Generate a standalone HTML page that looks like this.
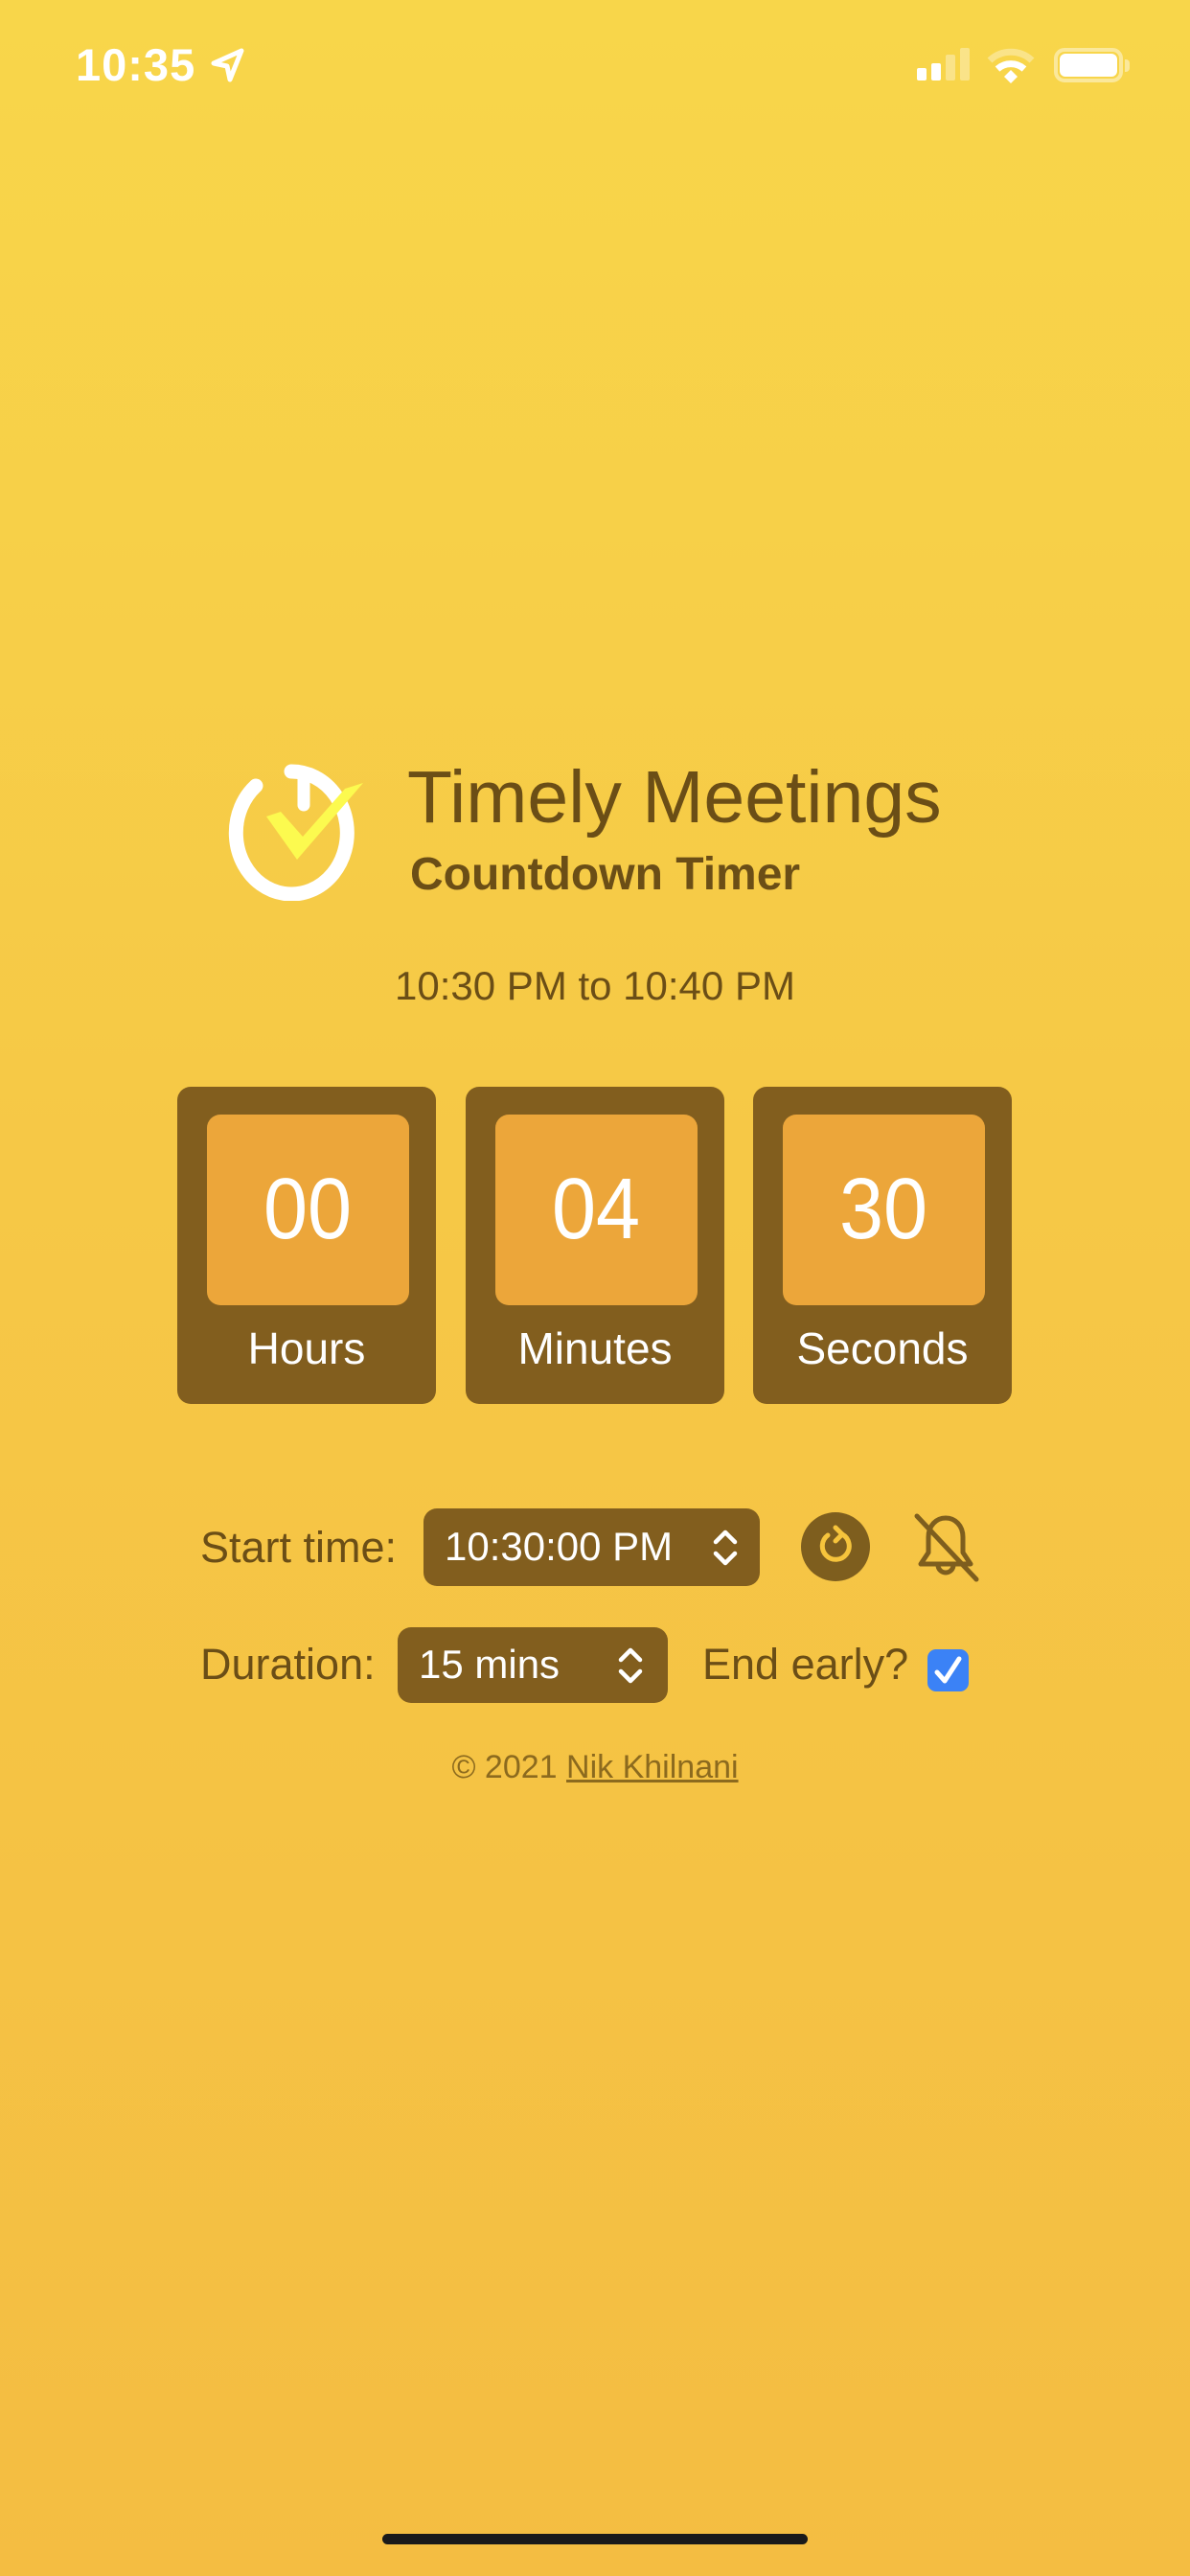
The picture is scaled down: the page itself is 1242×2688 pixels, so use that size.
<!DOCTYPE html>
<html><head><meta charset="utf-8">
<style>
*{margin:0;padding:0;box-sizing:border-box}
html,body{width:1242px;height:2688px;overflow:hidden}
body{background:linear-gradient(180deg,#f8d64a 0%,#f6c846 45%,#f4bd42 100%);font-family:"Liberation Sans",sans-serif;position:relative;color:#6b4e16}
.a{position:absolute}
.box{position:absolute;top:1134px;width:270px;height:331px;background:#825e1e;border-radius:14px}
.inner{position:absolute;left:31px;top:29px;width:211px;height:199px;background:#eca63a;border-radius:14px;color:#fff;font-size:90px;text-align:center;line-height:199px;transform-origin:center;}
.inner span{display:inline-block;transform:scaleX(0.92)}
.lbl{position:absolute;left:0;right:0;top:248px;text-align:center;color:#fff;font-size:46px;line-height:50px}
.sel{position:absolute;background:#825e1e;border-radius:14px;color:#fff;font-size:42px}
.t{font-size:45px;color:#6b4e16;white-space:nowrap}
</style></head><body>
<!-- status bar -->
<div class="a" style="left:79px;top:40px;font-size:47px;font-weight:bold;color:#fff;letter-spacing:1px">10:35</div>
<svg class="a" style="left:218px;top:48px" width="40" height="40" viewBox="0 0 40 40"><path d="M34 5 L5 18 L19 21 L22 35 Z" fill="none" stroke="#fff" stroke-width="5" stroke-linejoin="round"/></svg>
<div class="a" style="left:957px;top:71px;width:10px;height:13px;background:#fff;border-radius:2px"></div>
<div class="a" style="left:972px;top:66px;width:10px;height:18px;background:#fff;border-radius:2px"></div>
<div class="a" style="left:987px;top:57px;width:10px;height:27px;background:rgba(255,255,255,.35);border-radius:2px"></div>
<div class="a" style="left:1002px;top:50px;width:10px;height:34px;background:rgba(255,255,255,.35);border-radius:2px"></div>
<svg class="a" style="left:1030px;top:48px" width="50" height="40" viewBox="0 0 50 40"><path d="M3 15 A32 32 0 0 1 47 15" fill="none" stroke="rgba(255,255,255,.35)" stroke-width="7"/><path d="M11 24 A21 21 0 0 1 39 24" fill="none" stroke="#fff" stroke-width="7"/><path d="M18 32 L25 25 L32 32 L25 39 Z" fill="#fff"/></svg>
<div class="a" style="left:1100px;top:50px;width:72px;height:36px;border:4px solid rgba(255,255,255,.45);border-radius:11px"></div>
<div class="a" style="left:1106px;top:56px;width:60px;height:24px;background:#fff;border-radius:6px"></div>
<div class="a" style="left:1174px;top:62px;width:5px;height:13px;background:rgba(255,255,255,.45);border-radius:0 4px 4px 0"></div>

<!-- logo -->
<svg class="a" style="left:234px;top:790px" width="160" height="150" viewBox="0 0 160 150">
<path d="M33 30 A58 64 0 1 0 70 15" fill="none" stroke="#fff" stroke-width="15" stroke-linecap="round"/>
<path d="M83 17 L83 50" stroke="#fff" stroke-width="13" stroke-linecap="round"/>
<path d="M44 62 L76 107 L145 27 L126 33 L82 83 L59 57 Z" fill="#fcfa4f"/>
</svg>
<div class="a" style="left:425px;top:788px;font-size:77px;white-space:nowrap;color:#6b4e16">Timely Meetings</div>
<div class="a" style="left:428px;top:885px;font-size:48px;font-weight:bold;white-space:nowrap;color:#6b4e16">Countdown Timer</div>
<div class="a" style="left:0;width:1242px;top:1005px;text-align:center;font-size:42px">10:30 PM to 10:40 PM</div>

<!-- boxes -->
<div class="box" style="left:185px"><div class="inner"><span>00</span></div><div class="lbl">Hours</div></div>
<div class="box" style="left:486px"><div class="inner"><span>04</span></div><div class="lbl">Minutes</div></div>
<div class="box" style="left:786px"><div class="inner"><span>30</span></div><div class="lbl">Seconds</div></div>

<!-- controls -->
<div class="a t" style="left:209px;top:1589px">Start time:</div>
<div class="sel" style="left:442px;top:1574px;width:351px;height:81px"><span class="a" style="left:22px;top:16px">10:30:00 PM</span>
<svg class="a" style="left:300px;top:20px" width="30" height="42" viewBox="0 0 30 42"><path d="M5 15 L15 5 L25 15 M5 27 L15 37 L25 27" fill="none" stroke="#fff" stroke-width="4.5" stroke-linecap="round" stroke-linejoin="round"/></svg></div>
<div class="a" style="left:836px;top:1578px;width:72px;height:72px;border-radius:50%;background:#7e5e1e"></div>
<svg class="a" style="left:848px;top:1590px" width="48" height="48" viewBox="0 0 48 48"><path d="M16 12 A14 14 0 1 0 31 11" fill="none" stroke="#f6c43c" stroke-width="5" stroke-linecap="round"/><path d="M24 4 L31 11 L24 18" fill="none" stroke="#f6c43c" stroke-width="5" stroke-linecap="round" stroke-linejoin="round"/></svg>
<svg class="a" style="left:953px;top:1578px" width="72" height="74" viewBox="0 0 72 74"><path d="M34 6 C24 6 16 14 16 26 L16 42 L8 54 L60 54 L52 42 L52 26 C52 14 44 6 34 6 Z" fill="none" stroke="#7e5e1e" stroke-width="5" stroke-linejoin="round"/><path d="M26 55 A8 8 0 0 0 42 55" fill="none" stroke="#7e5e1e" stroke-width="5"/><path d="M4 4 L66 70" stroke="#7e5e1e" stroke-width="5" stroke-linecap="round"/></svg>

<div class="a t" style="left:209px;top:1711px">Duration:</div>
<div class="sel" style="left:415px;top:1698px;width:282px;height:79px"><span class="a" style="left:22px;top:15px">15 mins</span>
<svg class="a" style="left:228px;top:19px" width="30" height="42" viewBox="0 0 30 42"><path d="M5 15 L15 5 L25 15 M5 27 L15 37 L25 27" fill="none" stroke="#fff" stroke-width="4.5" stroke-linecap="round" stroke-linejoin="round"/></svg></div>
<div class="a t" style="left:733px;top:1711px">End early?</div>
<div class="a" style="left:968px;top:1721px;width:43px;height:44px;background:#3b82f6;border-radius:9px"></div>
<svg class="a" style="left:968px;top:1721px" width="43" height="44" viewBox="0 0 43 44"><path d="M10 24 L18 33 L33 10" fill="none" stroke="#fff" stroke-width="5" stroke-linecap="round" stroke-linejoin="round"/></svg>

<div class="a" style="left:0;width:1242px;top:1825px;text-align:center;font-size:34px;color:#8c6a1e">© 2021 <span style="text-decoration:underline">Nik Khilnani</span></div>

<div class="a" style="left:399px;top:2644px;width:444px;height:11px;background:#1a1a1a;border-radius:6px"></div>
</body></html>
